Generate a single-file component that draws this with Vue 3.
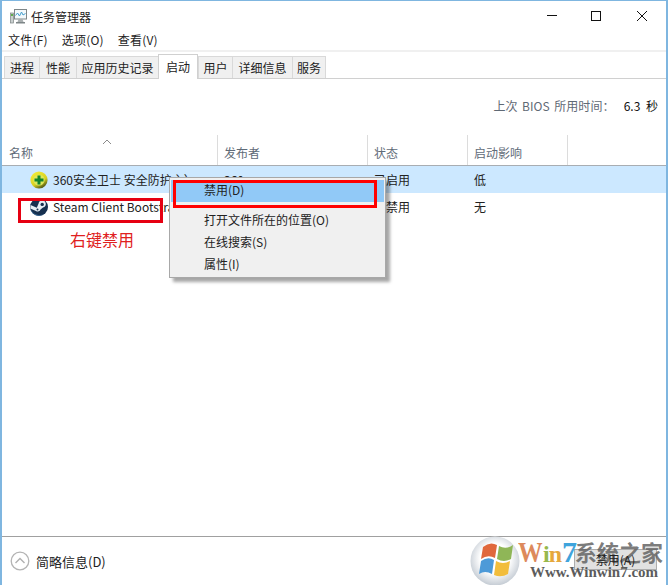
<template>
  <div class="win">
    <div class="title">
      <svg class="appicon" width="17" height="15" viewBox="0 0 17 15">
        <rect x="0.5" y="4" width="3" height="10" fill="#c9cfcf" stroke="#7d8484" stroke-width="0.7"/>
        <rect x="1" y="5" width="2" height="2" fill="#5fae4a"/>
        <rect x="4.5" y="0.5" width="12" height="9.5" fill="#f3f9fc" stroke="#7e8688"/>
        <path d="M5.5 6.5 L7.5 4 L9.5 7 L11.5 3 L13 6 L15.5 4.5" fill="none" stroke="#45a0cf" stroke-width="1"/>
        <path d="M8.5 10 h4 l1 3 h-6 z" fill="#aab0b1"/>
        <rect x="6" y="13" width="9" height="1.5" fill="#7e8688"/>
      </svg>
      <span class="title-text">任务管理器</span>
      <div class="controls">
        <svg width="12" height="12" viewBox="0 0 12 12"><path d="M3 5.5 H13" stroke="#111" fill="none"/></svg>
        <svg width="12" height="12" viewBox="0 0 12 12"><rect x="1.5" y="1.5" width="9" height="9" stroke="#111" fill="none"/></svg>
        <svg width="12" height="12" viewBox="0 0 12 12"><path d="M1 1 L11 11 M11 1 L1 11" stroke="#111" fill="none"/></svg>
      </div>
    </div>
    <div class="menu">
      <span v-for="m in menus" :key="m">{{ m }}</span>
    </div>
    <div class="rule"></div>
    <div class="tabs">
      <span v-for="t in tabs" :key="t.n" class="tab" :class="{ on: t.n === '启动' }" :style="{ width: t.w + 'px' }">{{ t.n }}</span>
    </div>
    <div class="bios">
      <span class="bios-label">上次 BIOS 所用时间：</span><span class="bios-value">6.3 秒</span>
    </div>
    <div class="head">
      <div class="hcell c1">
        <svg class="sort" width="10" height="6" viewBox="0 0 10 6"><path d="M1 5 L5 1 L9 5" fill="none" stroke="#8a8a8a"/></svg>
        名称
      </div>
      <div class="hcell c2">发布者</div>
      <div class="hcell c3">状态</div>
      <div class="hcell c4">启动影响</div>
    </div>
    <div class="row sel">
      <div class="cell c1">
        <svg class="ricon" width="18" height="18" viewBox="0 0 18 18">
          <defs>
            <linearGradient id="y360" x1="0.2" y1="0" x2="0.8" y2="1"><stop offset="0" stop-color="#f4ee3a"/><stop offset="0.6" stop-color="#d8d020"/><stop offset="1" stop-color="#2c3a14"/></linearGradient>
          </defs>
          <circle cx="9" cy="9" r="8.6" fill="url(#y360)"/>
          <circle cx="9" cy="9" r="5.6" fill="#dde85a"/>
          <path d="M9 4.5 V13.5 M4.5 9 H13.5" stroke="#12842a" stroke-width="3"/>
        </svg>
        <span>360安全卫士 安全防护主）</span>
      </div>
      <div class="cell c2">360</div>
      <div class="cell c3">已启用</div>
      <div class="cell c4">低</div>
    </div>
    <div class="row">
      <div class="cell c1">
        <svg class="ricon" width="18" height="18" viewBox="0 0 18 18">
          <circle cx="9" cy="9" r="9" fill="#16304f"/>
          <path d="M0.3 10.5 L6 13 A3 3 0 0 0 10.5 11.5 L13 9.5 A3.6 3.6 0 1 0 8.6 5.6 L6.8 9.7 L0.6 7 Z" fill="#e6eef5"/>
          <path d="M0.3 10.5 A9 9 0 0 0 15 15.6 A10 10 0 0 1 0.3 10.5 Z" fill="#3a6f9f"/>
          <circle cx="12.2" cy="6.4" r="1.7" fill="#16304f"/>
          <circle cx="7.5" cy="11.6" r="1" fill="#16304f"/>
        </svg>
        <span>Steam Client Bootstrapper</span>
      </div>
      <div class="cell c2">Valve</div>
      <div class="cell c3">已禁用</div>
      <div class="cell c4">无</div>
    </div>
    <div class="spacer"></div>
    <div class="foot">
      <span class="less">
        <svg width="20" height="20" viewBox="0 0 20 20"><circle cx="10" cy="10" r="8.8" fill="#fff" stroke="#b4b4b4" stroke-width="1.3"/><path d="M5.5 12 L10 7.5 L14.5 12" fill="none" stroke="#b0b0b0" stroke-width="1.4"/></svg>
        简略信息(D)
      </span>
      <div class="btn"><span class="btn-label">禁用(A)</span></div>
    </div>

    <div class="annot box1"></div>
    <div class="annot-text">右键禁用</div>
    <div class="ctx">
      <div class="item hot">禁用(D)</div>
      <div class="sep"></div>
      <div class="item">打开文件所在的位置(O)</div>
      <div class="item">在线搜索(S)</div>
      <div class="item">属性(I)</div>
    </div>
    <div class="annot box2"></div>

    <div class="mark">
      <svg class="orb" width="50" height="50" viewBox="0 0 50 50">
        <defs>
          <radialGradient id="g" cx="50%" cy="45%" r="55%"><stop offset="0.55" stop-color="#ffffff"/><stop offset="1" stop-color="#c5ccd4"/></radialGradient>
        </defs>
        <circle cx="25" cy="25" r="24.5" fill="url(#g)"/>
        <path d="M13 11 Q20 5 27 9 L25 22 Q18 18 11 23 Z" fill="#e0683c"/>
        <path d="M29 10 Q36 14 43 9 L41 23 Q34 27 27 23 Z" fill="#8fb657"/>
        <path d="M11 25 Q18 20 24 24 L22 38 Q15 34 9 38 Z" fill="#4d9ad8"/>
        <path d="M26 25 Q33 29 40 25 L38 38 Q31 42 24 39 Z" fill="#f2bd3c"/>
      </svg>
      <div class="brand"><span class="w">W</span><span class="i">i</span><span class="n">n</span><span class="seven">7</span></div>
      <div class="cn">系统之家</div>
      <div class="url">Www.Winwin7.com</div>
    </div>
  </div>
</template>

<script setup>
const menus = ['文件(F)', '选项(O)', '查看(V)']
const tabs = [
  { n: '进程', w: 35 },
  { n: '性能', w: 37 },
  { n: '应用历史记录', w: 82 },
  { n: '启动', w: 40 },
  { n: '用户', w: 34 },
  { n: '详细信息', w: 60 },
  { n: '服务', w: 34 }
]
</script>

<style>
html, body { margin: 0; background: #fff; }
</style>

<style scoped>
.win {
  position: relative;
  width: 668px;
  height: 585px;
  box-sizing: border-box;
  overflow: hidden;
  background: #fff;
  border-top: 1px solid #7fb6e0;
  border-left: 2px solid #7fb6e0;
  border-right: 2px solid #7fb6e0;
  display: flex;
  flex-direction: column;
  font-family: "Noto Sans CJK SC", "Liberation Sans", sans-serif;
  font-size: 12px;
  color: #222;
}
.title { height: 28px; display: flex; align-items: center; position: relative; flex: none; }
.appicon { margin-left: 8px; margin-top: 2px; }
.title-text { margin-left: 4px; margin-top: 3px; }
.controls { position: absolute; right: 18px; top: 9px; display: flex; gap: 34px; }
.controls svg { display: block; overflow: visible; }
.menu { height: 21px; display: flex; gap: 14px; padding-left: 6px; align-items: center; flex: none; letter-spacing: .2px; }
.rule { height: 2px; background: #f0f0f0; flex: none; }
.tabs { height: 26px; flex: none; display: flex; align-items: flex-end; padding-left: 2px; border-bottom: 1px solid #d0d0d0; }
.tab {
  box-sizing: border-box; height: 22px; line-height: 22px; text-align: center; background: #f0f0f0;
  border-left: 1px solid #d9d9d9; border-top: 1px solid #d9d9d9; flex: none;
}
.tab:last-child { border-right: 1px solid #d9d9d9; }
.tab.on { height: 25px; line-height: 23px; background: #fff; margin-bottom: -1px; border-top-color: #d0d0d0; border-left-color: #d0d0d0; border-right: 1px solid #d0d0d0; position: relative; }
.bios { height: 56px; box-sizing: border-box; padding: 0 8px 3px 0; flex: none; display: flex; justify-content: flex-end; align-items: center; }
.bios-label { color: #5f6975; word-spacing: 1.5px; letter-spacing: .1px; }
.bios-value { margin-left: 9px; color: #111; word-spacing: 3px; }
.head { height: 30px; flex: none; display: flex; border-bottom: 1px solid #a8adb2; }
.hcell { box-sizing: border-box; height: 100%; padding: 9px 0 0 6px; color: #5f6b78; border-right: 1px solid #dcdcdc; position: relative; }
.c1 { width: 216px; box-sizing: border-box; flex: none; }
.c2 { width: 150px; box-sizing: border-box; flex: none; }
.c3 { width: 100px; box-sizing: border-box; flex: none; }
.c4 { width: 100px; box-sizing: border-box; flex: none; }
.hcell.c1 { padding-left: 7px; }
.sort { position: absolute; left: 100px; top: 4px; }
.row { height: 27px; display: flex; flex: none; align-items: center; }
.row.sel { background: #cce8ff; }
.cell { padding-left: 6px; white-space: nowrap; overflow: hidden; }
.cell.c1 { padding-left: 28px; display: flex; align-items: center; gap: 5px; }
.ricon { flex: none; }
.spacer { flex: 1; border-bottom: 1px solid #a0a0a0; }
.foot { height: 48px; flex: none; display: flex; align-items: center; justify-content: space-between; padding: 0 9px 0 8px; }
.less { display: flex; align-items: center; gap: 6px; font-size: 13px; }
.btn { box-sizing: border-box; width: 83px; height: 21px; margin-bottom: 3px; line-height: 19px; text-align: center; background: #e1e1e1; border: 1px solid #adadad; }
.btn-label { position: relative; z-index: 2; color: #222; }

.annot { position: absolute; border: 3px solid #e60012; box-sizing: border-box; }
.box1 { left: 16px; top: 197px; width: 145px; height: 25px; }
.box2 { left: 171px; top: 179px; width: 204px; height: 28px; border-color: #f00; }
.annot-text { position: absolute; left: 68px; top: 228px; font-size: 16px; color: #e02020; line-height: 20px; }
.ctx {
  position: absolute; left: 167px; top: 176px; width: 217px; height: 101px;
  box-sizing: border-box; background: #f0f0f0; border: 1px solid #a8a8a8;
  box-shadow: 4px 4px 3px rgba(0,0,0,.35); padding: 2px 1px;
}
.item { height: 22px; line-height: 21px; padding-left: 33px; font-size: 12px; }
.item.hot { background: #91c9f7; line-height: 20px; }
.sep { height: 7px; }

.mark { position: absolute; left: 468px; top: 535px; width: 198px; height: 50px; }
.orb { position: absolute; left: 0; top: 0; display: block; }
.brand { position: absolute; left: 48px; top: 0; font-family: "Liberation Serif", serif; font-weight: 700; font-size: 30px; line-height: 31px; white-space: nowrap; display: flex; align-items: baseline; }
.w { color: #dd8a5c; display: block; width: 25px; transform: scaleX(.82); transform-origin: left; }
.i { color: #97b84c; font-size: 24px; }
.n { color: #e6a83c; font-size: 24px; margin-left: -1px; }
.seven { color: #3fa4dc; }
.cn { position: absolute; left: 105px; top: 3px; color: rgba(100,100,100,.85); font-size: 22px; line-height: 24px; font-weight: 700; white-space: nowrap; }
.url { position: absolute; left: 60px; top: 27px; font-family: "Liberation Serif", serif; font-weight: 700; font-size: 15px; line-height: 18px; color: #5c5c5c; white-space: nowrap; }
</style>
